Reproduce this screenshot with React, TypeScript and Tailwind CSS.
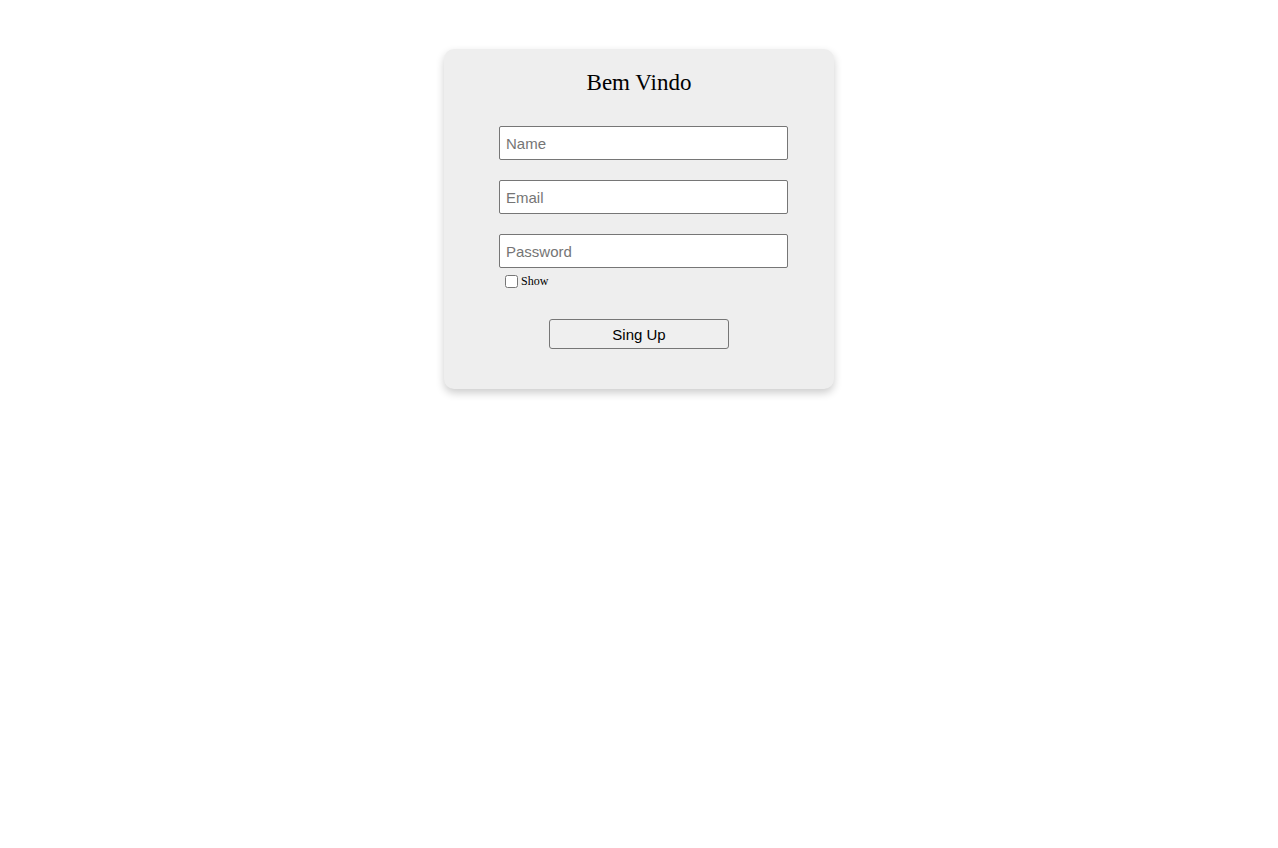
import { useState } from 'react';

export default function App() {
  const [show, setShow] = useState(false);

  return (
    <div className="min-h-screen bg-white pt-[49px] flex justify-center items-start">
      <div className="w-[390px] h-[340px] bg-[#eeeeee] rounded-[10px] shadow-[0_4px_9px_rgba(0,0,0,0.2)] flex flex-col items-center">
        <h1 className="mt-[20px] h-[28px] leading-[28px] text-[23px] text-black font-['Liberation_Serif',serif]">Bem Vindo</h1>

        <form className="mt-[29px] ml-[9px] flex flex-col w-[289px]" onSubmit={(e) => e.preventDefault()}>
          <input
            type="text"
            placeholder="Name"
            className="h-[34px] w-full bg-white border border-[#767676] rounded-[2px] px-[6px] text-[15px] text-black placeholder-[#757575] font-['Liberation_Sans',Arial,sans-serif] outline-none"
          />
          <input
            type="email"
            placeholder="Email"
            className="mt-[20px] h-[34px] w-full bg-white border border-[#767676] rounded-[2px] px-[6px] text-[15px] text-black placeholder-[#757575] font-['Liberation_Sans',Arial,sans-serif] outline-none"
          />
          <input
            type={show ? 'text' : 'password'}
            placeholder="Password"
            className="mt-[20px] h-[34px] w-full bg-white border border-[#767676] rounded-[2px] px-[6px] text-[15px] text-black placeholder-[#757575] font-['Liberation_Sans',Arial,sans-serif] outline-none"
          />

          <label className="mt-[7px] ml-[6px] flex items-center gap-[3px] h-[13px] text-[12px] leading-[13px] text-black font-['Liberation_Serif',serif]">
            <input
              type="checkbox"
              checked={show}
              onChange={(e) => setShow(e.target.checked)}
              className="w-[13px] h-[13px] m-0"
            />
            <span className="-mt-[1px]">Show</span>
          </label>

          <button
            type="submit"
            className="mt-[31px] -ml-[9px] self-center w-[180px] h-[30px] pt-[2px] bg-[#efefef] border border-[#767676] rounded-[3px] text-[15px] text-black font-['Liberation_Sans',Arial,sans-serif]"
          >
            Sing Up
          </button>
        </form>
      </div>
    </div>
  );
}
